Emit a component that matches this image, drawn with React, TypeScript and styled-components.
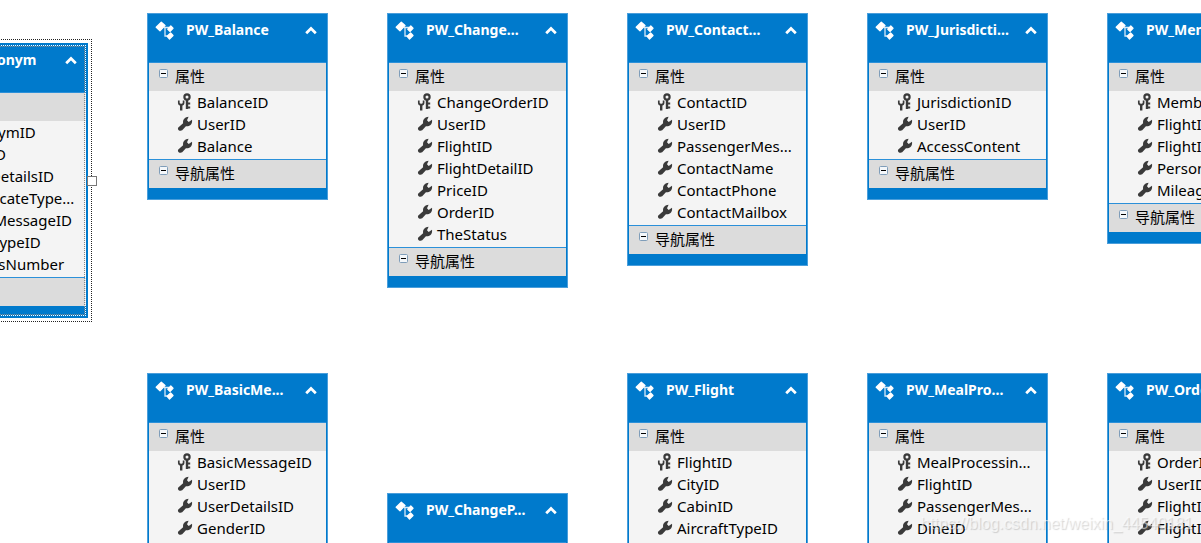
import React from "react";
import styled, { createGlobalStyle, css } from "styled-components";

const GlobalStyle = createGlobalStyle`
  * { box-sizing: border-box; }
  body { margin: 0; background: #fff; }
`;

const BLUE = "#007acc";

const Canvas = styled.main`
  position: relative;
  width: 100%;
  height: 100vh;
  overflow: hidden;
  background: #fff;
  font-family: "Noto Sans", "Noto Sans CJK SC", sans-serif;
`;

const Entity = styled.article<{ $x: number; $y: number; $selected?: boolean }>`
  position: absolute;
  left: ${(p) => p.$x}px;
  top: ${(p) => p.$y}px;
  width: 181px;
  border: 1px solid #4a9edb;
  background: ${BLUE};
  ${(p) =>
    p.$selected &&
    css`
      border-color: ${BLUE};
      outline: 1px dotted #222;
      outline-offset: 3px;
    `}
`;

const SelectionFrame = styled.div`
  position: absolute;
  inset: 1px;
  border: 1px dotted #fff;
  outline: 1px dotted #888;
  outline-offset: -2px;
  pointer-events: none;
`;

const ResizeHandle = styled.div`
  position: absolute;
  right: -10px;
  top: 132px;
  width: 10px;
  height: 10px;
  border: 1px solid #777;
  background: #fff;
`;

const Header = styled.header`
  display: flex;
  align-items: flex-start;
  height: 48px;
  padding: 6px 10px 0 7px;
  color: #fff;
`;

const Title = styled.h2`
  flex: 1;
  margin: 0 0 0 11px;
  font-size: 14px;
  line-height: 20px;
  font-weight: 700;
  white-space: nowrap;
`;

const IconButton = styled.button`
  display: block;
  padding: 0;
  border: 0;
  background: none;
  color: inherit;
  line-height: 0;
`;

const ChevronButton = styled(IconButton)`
  margin-top: 6px;
`;

const Panel = styled.div`
  margin: 0 1px;
  border-top: 1px solid #2b90d9;
`;

const SectionBar = styled.div`
  display: flex;
  align-items: flex-start;
  gap: 7px;
  height: 28px;
  padding: 5px 0 0 10px;
  background: #dcdcdc;
`;

const SectionTitle = styled.h3`
  margin: 0;
  color: #000;
  font-family: "Noto Sans CJK SC", sans-serif;
  font-size: 15px;
  line-height: 16px;
  font-weight: 400;
`;

const Fields = styled.ul<{ $open?: boolean }>`
  margin: 0;
  padding: 0 0 2px;
  min-height: ${(p) => (p.$open ? "160px" : "0")};
  list-style: none;
  background: #f4f4f4;
`;

const Field = styled.li`
  display: flex;
  align-items: center;
  gap: 4px;
  height: 22px;
  padding-left: 28px;
  color: #000;
  font-size: 15px;
  line-height: 22px;
  white-space: nowrap;
`;

const Footer = styled.div`
  height: 11px;
`;

const Watermark = styled.footer`
  position: absolute;
  right: 8px;
  bottom: 10px;
  color: rgba(255, 255, 255, 0.55);
  font-family: "Liberation Sans", Arial, sans-serif;
  font-size: 16px;
  line-height: 18px;
  text-shadow: 1px 1px 1px rgba(120, 120, 120, 0.3);
`;

const EntityIcon = () => (
  <svg width="20" height="21" viewBox="0 0 20 21" aria-hidden="true">
    <path d="M1.200 7.300 6.300 2.200l3.700 3.400L5 10.700z" fill="#fff" stroke="#fff" strokeWidth="1.300" strokeLinejoin="round" />
    <path d="M9 7.500h5M10 7.500v8.500h4" fill="none" stroke="#d5e9f7" strokeWidth="1.300" />
    <path d="M12.800 9.300 15.800 6l2.200 2.200-2.900 3.200z" fill="#fff" stroke="#fff" strokeWidth="1.300" strokeLinejoin="round" />
    <path d="M12.200 16.300 15.600 13l2.400 2.500-3.500 3.500z" fill="#fff" stroke="#fff" strokeWidth="1.300" strokeLinejoin="round" />
  </svg>
);

const Chevron = () => (
  <svg width="12" height="9" viewBox="0 0 12 9" aria-hidden="true">
    <path d="M1.200 7.300 6 2.500l4.800 4.800" fill="none" stroke="#fff" strokeWidth="2.700" />
  </svg>
);

const CollapseBox = () => (
  <svg width="9" height="10" viewBox="0 0 9 10" aria-hidden="true">
    <rect x="0.5" y="1.500" width="8" height="8" rx="1" fill="#f4f7fa" stroke="#7f9db9" />
    <path d="M2 5.500h5" stroke="#000" />
  </svg>
);

const Wrench = () => (
  <svg width="16" height="16" viewBox="0 0 16 16" aria-hidden="true">
    <path
      d="M1.300 11.500 6.100 7.300C5.600 3.600 7.800 1 11.600.8L10 4.300l1.700 1.700L15 3.700c.7 4.300-2.400 7-6.100 6.500L5.200 14.300c-2.500 1.400-5.300-.7-3.900-2.800z"
      fill="#3a3a3a"
    />
  </svg>
);

const KeyWrench = () => (
  <svg width="16" height="18" viewBox="0 0 16 18" aria-hidden="true">
    <g fill="none" stroke="#3a3a3a">
      <circle cx="10" cy="4" r="2.600" strokeWidth="2.200" />
      <path d="M10 6.500V16" strokeWidth="2.400" />
      <path d="M10 10.500h3.200M10 14.500h3.200" strokeWidth="2" />
      <path d="M1.800 7.500v2.200c0 1.200.9 2 2.400 2s2.400-.8 2.400-2V7.500" strokeWidth="1.700" />
      <path d="M4.200 11v6.500" strokeWidth="2.400" />
    </g>
  </svg>
);

interface EntityData {
  title: string;
  x: number;
  y: number;
  fields?: string[];
  open?: boolean;
  selected?: boolean;
}

const entities: EntityData[] = [
  {
    title: "PW_Acronym",
    x: -93,
    y: 43,
    selected: true,
    fields: ["AcronymID", "UserID", "UserDetailsID", "CertificateType...", "BasicMessageID", "MealTypeID", "PapersNumber"],
  },
  { title: "PW_Balance", x: 147, y: 13, fields: ["BalanceID", "UserID", "Balance"] },
  {
    title: "PW_Change...",
    x: 387,
    y: 13,
    fields: ["ChangeOrderID", "UserID", "FlightID", "FlightDetailID", "PriceID", "OrderID", "TheStatus"],
  },
  {
    title: "PW_Contact...",
    x: 627,
    y: 13,
    fields: ["ContactID", "UserID", "PassengerMes...", "ContactName", "ContactPhone", "ContactMailbox"],
  },
  { title: "PW_Jurisdicti...", x: 867, y: 13, fields: ["JurisdictionID", "UserID", "AccessContent"] },
  { title: "PW_Member", x: 1107, y: 13, fields: ["MemberID", "FlightID", "FlightID", "PersonID", "Mileage"] },
  {
    title: "PW_BasicMe...",
    x: 147,
    y: 373,
    open: true,
    fields: ["BasicMessageID", "UserID", "UserDetailsID", "GenderID"],
  },
  { title: "PW_ChangeP...", x: 387, y: 493, open: true, fields: [] },
  { title: "PW_Flight", x: 627, y: 373, open: true, fields: ["FlightID", "CityID", "CabinID", "AircraftTypeID"] },
  {
    title: "PW_MealPro...",
    x: 867,
    y: 373,
    open: true,
    fields: ["MealProcessin...", "FlightID", "PassengerMes...", "DineID"],
  },
  { title: "PW_Order", x: 1107, y: 373, open: true, fields: ["OrderID", "UserID", "FlightID", "FlightID"] },
];

const Section = ({ label }: { label: string }) => (
  <SectionBar>
    <IconButton type="button" aria-label={`Collapse ${label}`}>
      <CollapseBox />
    </IconButton>
    <SectionTitle>{label}</SectionTitle>
  </SectionBar>
);

const EntityCard = ({ title, x, y, fields = [], open, selected }: EntityData) => (
  <Entity $x={x} $y={y} $selected={selected}>
    <Header>
      <EntityIcon />
      <Title>{title}</Title>
      <ChevronButton type="button" aria-label={`Collapse ${title}`}>
        <Chevron />
      </ChevronButton>
    </Header>
    <Panel>
      <Section label="属性" />
      <Fields $open={open}>
        {fields.map((name, i) => (
          <Field key={i}>
            {i === 0 ? <KeyWrench /> : <Wrench />}
            {name}
          </Field>
        ))}
      </Fields>
    </Panel>
    {!open && (
      <>
        <Panel>
          <Section label="导航属性" />
        </Panel>
        <Footer />
      </>
    )}
    {selected && (
      <>
        <SelectionFrame />
        <ResizeHandle />
      </>
    )}
  </Entity>
);

export default function App() {
  return (
    <>
      <GlobalStyle />
      <Canvas>
        {entities.map((entity) => (
          <EntityCard key={entity.title} {...entity} />
        ))}
        <Watermark>https://blog.csdn.net/weixin_44540181</Watermark>
      </Canvas>
    </>
  );
}
